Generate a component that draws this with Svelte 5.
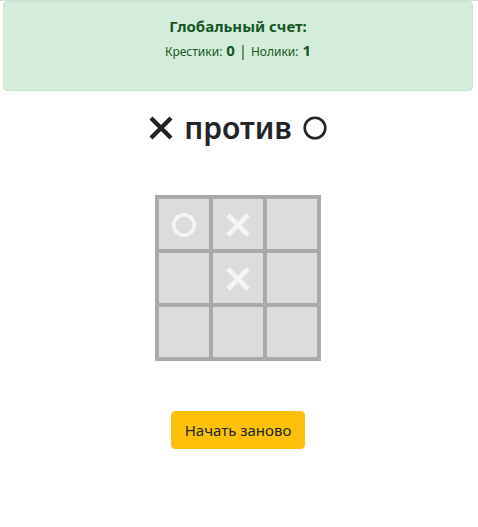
<script>
  let board = $state(['o', 'x', '', '', 'x', '', '', '', '']);
  let next = $state('o');
  const score = { x: 0, o: 1 };
  const names = { x: 'Крестик', o: 'Нолик', '': 'Пусто' };

  function play(i) {
    if (board[i]) return;
    board[i] = next;
    next = next === 'x' ? 'o' : 'x';
  }

  function restart() {
    board = Array(9).fill('');
    next = 'x';
  }
</script>

{#snippet mark(kind, weight)}
  <svg class="mark" viewBox="0 0 24 24" fill="none" stroke="currentColor" stroke-width={weight} aria-hidden="true">
    {#if kind === 'x'}
      <path d="M2 2 22 22M22 2 2 22" />
    {:else}
      <circle cx="12" cy="12" r="10.3" />
    {/if}
  </svg>
{/snippet}

<main>
  <section class="score">
    <h2>Глобальный счет:</h2>
    <p><small>Крестики:</small> <b>{score.x}</b> | <small>Нолики:</small> <b>{score.o}</b></p>
  </section>

  <h1>{@render mark('x', 4.4)}<span>против</span>{@render mark('o', 2.6)}</h1>

  <div class="board">
    {#each board as cell, i}
      <button class="cell" aria-label={names[cell]} onclick={() => play(i)}>
        {#if cell}{@render mark(cell, cell === 'x' ? 4.6 : 3.4)}{/if}
      </button>
    {/each}
  </div>

  <button class="restart" onclick={restart}>Начать заново</button>
</main>

<style>
  :global(body) {
    background: #fff;
  }
  main {
    display: flex;
    flex-direction: column;
    align-items: center;
    padding: 0 5px 0 3px;
    border-top: 1px solid #d9dadd;
    color: #212529;
    font: 15px/24px 'Noto Sans', sans-serif;
  }
  .score {
    box-sizing: border-box;
    align-self: stretch;
    padding: 12px 20px 28px;
    border: 1px solid #c3e6cb;
    border-radius: 4px;
    background: #d4edda;
    color: #155724;
    text-align: center;
  }
  .score h2,
  .score p {
    margin: 0;
    font-size: 15px;
    line-height: 24px;
  }
  .score h2,
  .score b {
    font-weight: 700;
  }
  .score small {
    font-size: 12px;
    line-height: 20px;
  }
  h1 {
    display: flex;
    align-items: center;
    gap: 11px;
    margin: 18px 0 48px;
    font-size: 30px;
    line-height: 38px;
    font-weight: 600;
  }
  .mark {
    flex: none;
    width: 24px;
    height: 24px;
  }
  .board {
    display: grid;
    grid-template-columns: repeat(3, 50px);
    grid-auto-rows: 50px;
    gap: 4px;
    padding: 4px;
    background: #a9a9a9;
  }
  .cell {
    display: flex;
    align-items: center;
    justify-content: center;
    padding: 2px 0 0;
    border: 0;
    background: #dcdcdc;
    color: #f5f5f5;
    cursor: pointer;
  }
  .restart {
    margin: 50px 0;
    padding: 6px 13px;
    border: 1px solid #ffc107;
    border-radius: 4px;
    background: #ffc107;
    color: #212529;
    font: inherit;
    cursor: pointer;
  }
</style>
